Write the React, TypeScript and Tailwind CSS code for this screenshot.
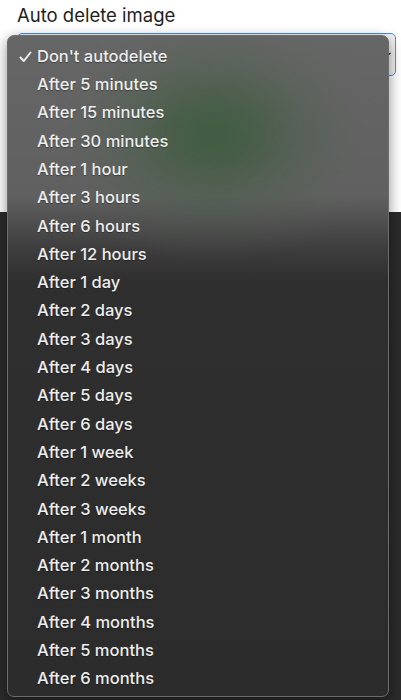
import React from "react";

const items = [
  "Don't autodelete",
  "After 5 minutes",
  "After 15 minutes",
  "After 30 minutes",
  "After 1 hour",
  "After 3 hours",
  "After 6 hours",
  "After 12 hours",
  "After 1 day",
  "After 2 days",
  "After 3 days",
  "After 4 days",
  "After 5 days",
  "After 6 days",
  "After 1 week",
  "After 2 weeks",
  "After 3 weeks",
  "After 1 month",
  "After 2 months",
  "After 3 months",
  "After 4 months",
  "After 5 months",
  "After 6 months",
];

export default function App() {
  return (
    <div
      className="relative w-[401px] h-[700px] overflow-hidden bg-[#2b2b2b]"
      style={{ fontFamily: 'Inter, "Liberation Sans", Arial, sans-serif' }}
    >
      <div className="h-[212px] bg-white px-[17px] pt-[2px] flex flex-col">
        <div className="text-[18.5px] leading-[26px] text-[#1e1e1e]">Auto delete image</div>
        <div className="mt-[5px] h-[43px] w-[379px] rounded-[5px] border border-[#4a8fdc] bg-[#f2f2f2] flex items-center justify-end pr-[3px]">
          <svg width="6" height="6" viewBox="0 0 6 6">
            <path d="M0.5 4.5 L4.5 1" stroke="#222" strokeWidth="1.4" fill="none" />
          </svg>
        </div>
      </div>

      <div
        className="absolute left-[7px] top-[35px] w-[382px] h-[662px] rounded-[7px] border border-[#6c6c6c] shadow-[0_4px_14px_rgba(0,0,0,0.45)] pt-[6px] bg-[radial-gradient(ellipse_175px_130px_at_205px_98px,rgba(60,92,62,0.9)_0%,rgba(64,92,64,0.7)_25%,rgba(75,96,76,0.45)_50%,rgba(88,98,88,0.18)_75%,rgba(95,95,95,0)_100%),linear-gradient(to_bottom,#666666_0px,#606060_160px,#3c3c3c_215px,#2f2f2f_245px,#2c2c2c_100%)]"
      >
        {items.map((t, i) => (
          <div key={t} className="relative h-[28.3px] flex items-center pl-[29px] text-[16.5px] font-[450] text-[#ededed] [text-shadow:0_1px_1px_rgba(0,0,0,0.35)]">
            {i === 0 && (
              <svg className="absolute left-[11px] top-[9px]" width="13" height="12" viewBox="0 0 13 12">
                <path d="M1.5 6.5 L4.8 10 L11.5 1.5" stroke="#ededed" strokeWidth="2" fill="none" strokeLinecap="round" strokeLinejoin="round" />
              </svg>
            )}
            <span>{t}</span>
          </div>
        ))}
      </div>
    </div>
  );
}
